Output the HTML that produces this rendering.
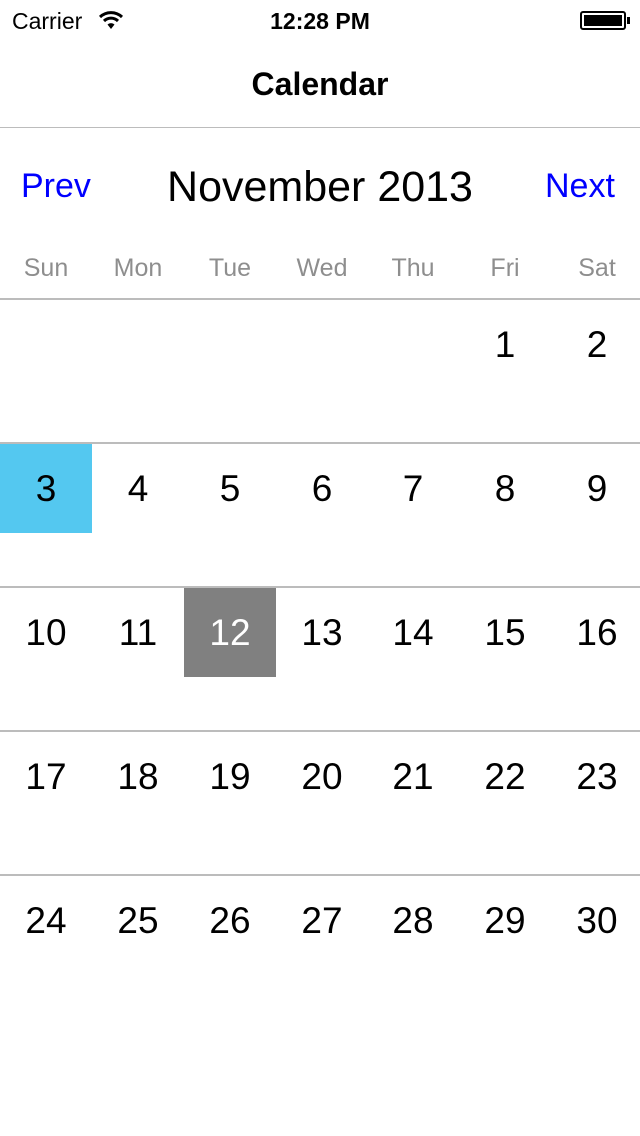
<!DOCTYPE html>
<html><head><style>
*{margin:0;padding:0;box-sizing:border-box}
body{width:640px;height:1136px;background:#fff;font-family:"Liberation Sans",sans-serif;position:relative;overflow:hidden}
.a{position:absolute}
.c{position:absolute;width:92px;text-align:center;font-size:37px;color:#000;line-height:90px;height:90px}
.w{position:absolute;width:92px;text-align:center;font-size:25px;color:#8e8e8e;top:254px}
.l{position:absolute;left:0;width:640px;height:2px;background:#bcbcbc}
</style></head><body>
<div class="a" style="left:12px;top:8px;font-size:23px">Carrier</div>
<svg class="a" style="left:98px;top:10px" width="26" height="20" viewBox="0 0 26 20"><path d="M2 7 A16 16 0 0 1 24 7" stroke="#000" stroke-width="3" fill="none"/><path d="M6 11 A10 10 0 0 1 20 11" stroke="#000" stroke-width="3" fill="none"/><path d="M9.5 14.5 L13 19 L16.5 14.5 A5 5 0 0 0 9.5 14.5Z" fill="#000"/></svg>
<div class="a" style="left:0;width:640px;text-align:center;top:8px;font-size:23px;font-weight:bold">12:28 PM</div>
<div class="a" style="left:580px;top:11px;width:46px;height:19px;border:2px solid #000;border-radius:3px;padding:2px"><div style="background:#000;width:100%;height:100%"></div></div>
<div class="a" style="left:627px;top:17px;width:3px;height:7px;background:#000"></div>
<div class="a" style="left:0;width:640px;text-align:center;top:66px;font-size:32px;font-weight:bold">Calendar</div>
<div class="l" style="top:127px;height:1px"></div>
<div class="a" style="left:21px;top:167px;font-size:34px;color:#0000ff">Prev</div>
<div class="a" style="left:0;width:640px;text-align:center;top:163px;font-size:43px">November 2013</div>
<div class="a" style="left:545px;top:167px;font-size:34px;color:#0000ff">Next</div>
<div class="w" style="left:0">Sun</div><div class="w" style="left:92px">Mon</div><div class="w" style="left:184px">Tue</div><div class="w" style="left:276px">Wed</div><div class="w" style="left:367px">Thu</div><div class="w" style="left:459px">Fri</div><div class="w" style="left:551px">Sat</div>
<div class="l" style="top:298px"></div><div class="l" style="top:442px"></div><div class="l" style="top:586px"></div><div class="l" style="top:730px"></div><div class="l" style="top:874px"></div>
<div class="a" style="left:0;top:444px;width:92px;height:89px;background:#54c8f0"></div>
<div class="a" style="left:184px;top:588px;width:92px;height:89px;background:#808080"></div>
<div class="c" style="left:459px;top:300px">1</div><div class="c" style="left:551px;top:300px">2</div>
<div class="c" style="left:0;top:444px">3</div><div class="c" style="left:92px;top:444px">4</div><div class="c" style="left:184px;top:444px">5</div><div class="c" style="left:276px;top:444px">6</div><div class="c" style="left:367px;top:444px">7</div><div class="c" style="left:459px;top:444px">8</div><div class="c" style="left:551px;top:444px">9</div>
<div class="c" style="left:0;top:588px">10</div><div class="c" style="left:92px;top:588px">11</div><div class="c" style="left:184px;top:588px;color:#fff">12</div><div class="c" style="left:276px;top:588px">13</div><div class="c" style="left:367px;top:588px">14</div><div class="c" style="left:459px;top:588px">15</div><div class="c" style="left:551px;top:588px">16</div>
<div class="c" style="left:0;top:732px">17</div><div class="c" style="left:92px;top:732px">18</div><div class="c" style="left:184px;top:732px">19</div><div class="c" style="left:276px;top:732px">20</div><div class="c" style="left:367px;top:732px">21</div><div class="c" style="left:459px;top:732px">22</div><div class="c" style="left:551px;top:732px">23</div>
<div class="c" style="left:0;top:876px">24</div><div class="c" style="left:92px;top:876px">25</div><div class="c" style="left:184px;top:876px">26</div><div class="c" style="left:276px;top:876px">27</div><div class="c" style="left:367px;top:876px">28</div><div class="c" style="left:459px;top:876px">29</div><div class="c" style="left:551px;top:876px">30</div>
</body></html>
